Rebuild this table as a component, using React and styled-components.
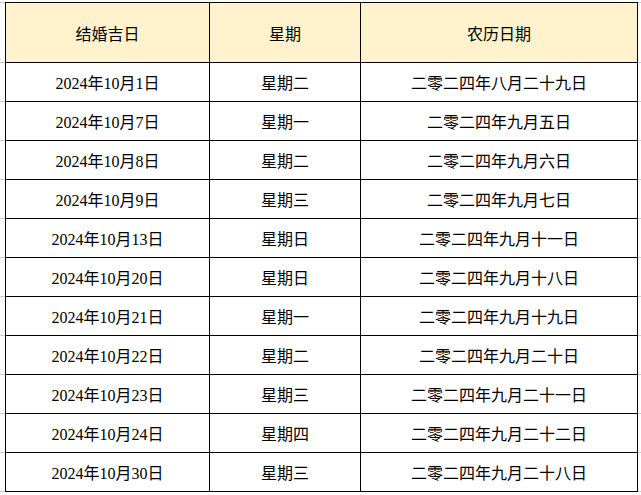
import React from 'react';
import styled, { createGlobalStyle } from 'styled-components';

const GlobalStyle = createGlobalStyle`
  html, body {
    margin: 0;
    padding: 0;
    background: #fff;
  }
  body {
    font-family: "Liberation Serif", "Noto Sans CJK SC", serif;
    color: #000;
  }
`;

const Sheet = styled.div`
  padding-top: 2px;
  width: 641px;
`;

const Row = styled.div`
  display: flex;
  height: ${(p) => (p.$header ? '61px' : '39px')};
`;

const Gutter = styled.div`
  box-sizing: border-box;
  width: ${(p) => (p.$right ? 'auto' : '5px')};
  flex: ${(p) => (p.$right ? '1' : 'none')};
  border-bottom: 1px solid #c8ccd6;
  border-top: ${(p) => (p.$header ? '1px solid #c8ccd6' : 'none')};
`;

const Cell = styled.div`
  box-sizing: border-box;
  width: ${(p) => p.$w}px;
  display: flex;
  align-items: center;
  justify-content: center;
  font-size: 16px;
  background: ${(p) => (p.$header ? '#fff2cc' : '#fff')};
  border-right: 1px solid #000;
  border-bottom: 1px solid #000;
  border-left: ${(p) => (p.$first ? '1px solid #000' : 'none')};
  border-top: ${(p) => (p.$header ? '1px solid #000' : 'none')};
  white-space: nowrap;
`;

const widths = [205, 151, 277];

const rows = [
  ['2024年10月1日', '星期二', '二零二四年八月二十九日'],
  ['2024年10月7日', '星期一', '二零二四年九月五日'],
  ['2024年10月8日', '星期二', '二零二四年九月六日'],
  ['2024年10月9日', '星期三', '二零二四年九月七日'],
  ['2024年10月13日', '星期日', '二零二四年九月十一日'],
  ['2024年10月20日', '星期日', '二零二四年九月十八日'],
  ['2024年10月21日', '星期一', '二零二四年九月十九日'],
  ['2024年10月22日', '星期二', '二零二四年九月二十日'],
  ['2024年10月23日', '星期三', '二零二四年九月二十一日'],
  ['2024年10月24日', '星期四', '二零二四年九月二十二日'],
  ['2024年10月30日', '星期三', '二零二四年九月二十八日'],
];

const SheetRow = ({ cells, header }) => (
  <Row $header={header}>
    <Gutter $header={header} />
    {cells.map((text, i) => (
      <Cell key={i} $w={widths[i]} $first={i === 0} $header={header}>
        {text}
      </Cell>
    ))}
    <Gutter $right $header={header} />
  </Row>
);

const App = () => (
  <>
    <GlobalStyle />
    <Sheet>
      <SheetRow header cells={['结婚吉日', '星期', '农历日期']} />
      {rows.map((r) => (
        <SheetRow key={r[0]} cells={r} />
      ))}
    </Sheet>
  </>
);

export default App;
